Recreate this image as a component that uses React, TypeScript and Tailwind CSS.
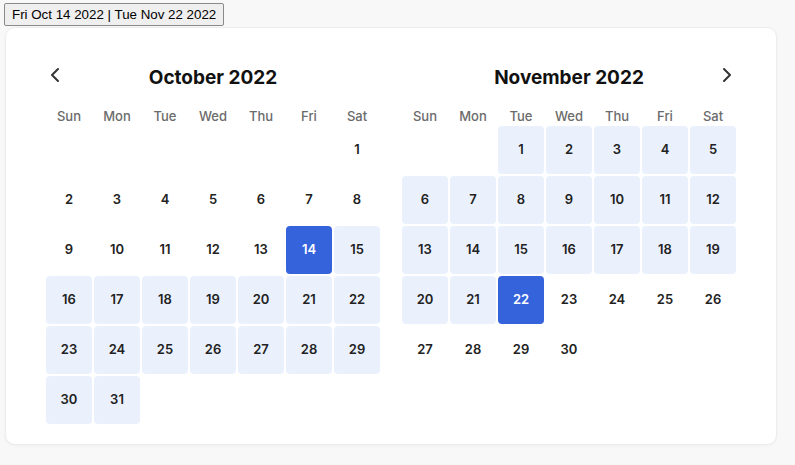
import React from 'react'
import { ChevronLeft, ChevronRight } from 'lucide-react'

const weekdays = ['Sun', 'Mon', 'Tue', 'Wed', 'Thu', 'Fri', 'Sat']

type Day = { n: number; kind: 'none' | 'range' | 'selected' }

function buildMonth(offset: number, length: number, kindOf: (n: number) => Day['kind']) {
  const cells: (Day | null)[] = []
  for (let i = 0; i < offset; i++) cells.push(null)
  for (let n = 1; n <= length; n++) cells.push({ n, kind: kindOf(n) })
  return cells
}

const october = buildMonth(6, 31, (n) => (n === 14 ? 'selected' : n > 14 ? 'range' : 'none'))
const november = buildMonth(2, 30, (n) => (n === 22 ? 'selected' : n < 22 ? 'range' : 'none'))

function Month({ title, cells, side }: { title: string; cells: (Day | null)[]; side: 'left' | 'right' }) {
  return (
    <div className="w-[334px]">
      <div className="relative flex h-6 items-center justify-center">
        {side === 'left' && (
          <button className="absolute left-[-3px] top-[-3px] text-[#333]">
            <ChevronLeft size={24} strokeWidth={2} />
          </button>
        )}
        <h2 className="text-[19px] font-bold leading-6 text-[#111]">{title}</h2>
        {side === 'right' && (
          <button className="absolute right-[-3px] top-[-3px] text-[#333]">
            <ChevronRight size={24} strokeWidth={2} />
          </button>
        )}
      </div>

      <div className="mt-[17px] grid h-[18px] grid-cols-[repeat(7,46px)] gap-x-[2px]">
        {weekdays.map((d) => (
          <div key={d} className="text-center text-[13px] font-medium leading-[18px] text-[#6b6b6b]">
            {d}
          </div>
        ))}
      </div>

      <div className="mt-[1px] grid grid-cols-[repeat(7,46px)] auto-rows-[48px] gap-[2px]">
        {cells.map((c, i) =>
          c ? (
            <div
              key={i}
              className={`flex items-center justify-center rounded-[4px] text-[13px] font-semibold ${
                c.kind === 'selected'
                  ? 'bg-[#3463dc] text-white'
                  : c.kind === 'range'
                  ? 'bg-[#eaf1fd] text-[#222]'
                  : 'text-[#222]'
              }`}
            >
              {c.n}
            </div>
          ) : (
            <div key={i} />
          )
        )}
      </div>
    </div>
  )
}

export default function App() {
  return (
    <div className="min-h-screen bg-[#f8f8f8] pl-[4px] pt-[3px] font-['Inter',sans-serif]">
      <button className="block h-[23px] rounded-[2px] border border-[#8a8a8a] bg-[#efefef] px-[7px] font-['Liberation_Sans',Arial,sans-serif] text-[13.33px] leading-none text-black">
        Fri Oct 14 2022 | Tue Nov 22 2022
      </button>

      <div className="ml-[1px] mt-[1px] h-[418px] w-[772px] rounded-[10px] border border-[#ededed] bg-white pl-[40px] pt-[38px] shadow-[0_1px_3px_rgba(0,0,0,0.04)]">
        <div className="flex gap-[22px]">
          <Month title="October 2022" cells={october} side="left" />
          <Month title="November 2022" cells={november} side="right" />
        </div>
      </div>
    </div>
  )
}
